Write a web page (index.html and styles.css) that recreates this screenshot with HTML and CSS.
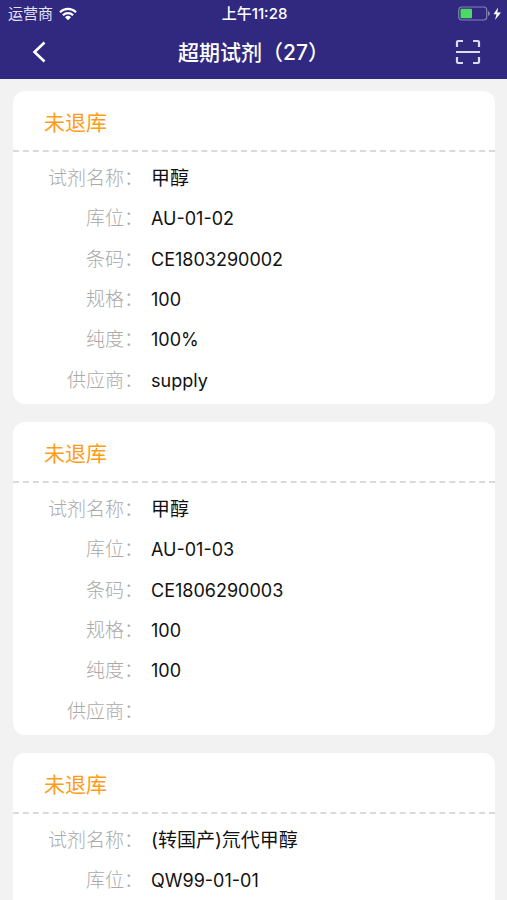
FILE: index.html
```html
<!DOCTYPE html>
<html lang="zh-CN">
<head>
<meta charset="utf-8">
<meta name="viewport" content="width=device-width, initial-scale=1">
<title>超期试剂（27）</title>
<link rel="stylesheet" href="styles.css">
</head>
<body>
<header class="top">
  <div class="status">
    <div class="status-side">
      <span>运营商</span>
      <svg class="wifi" width="18" height="14" viewBox="0 0 18 14" aria-hidden="true">
        <g fill="none" stroke="currentColor" stroke-width="2.2">
          <path d="M1 5.2a11.4 11.4 0 0 1 16 0"/>
          <path d="M3.9 8.2a7.3 7.3 0 0 1 10.2 0"/>
        </g>
        <path d="M9 13.2 6 10.3a4.3 4.3 0 0 1 6 0z" fill="currentColor"/>
      </svg>
    </div>
    <time class="clock">上午11:28</time>
    <div class="status-side status-end">
      <svg width="44" height="16" viewBox="0 0 44 16" aria-hidden="true">
        <rect x="1.7" y="1" width="28" height="13" rx="3" fill="none" stroke="#8582b4" stroke-width="1.2"/>
        <path d="M31 5q2 .8 2 2.5t-2 2.5z" fill="#8582b4"/>
        <rect x="3.5" y="2.8" width="11.5" height="9.4" rx="1" fill="#4cd964"/>
        <path d="M41 1.500 36.500 8.300h3L38 14l6-7.400h-3.600z" fill="#fff"/>
      </svg>
    </div>
  </div>
  <nav class="bar">
    <button class="icon-button" type="button" aria-label="返回">
      <svg width="28" height="28" viewBox="0 0 28 28" aria-hidden="true">
        <path d="M19.500 3.500 9.500 13l10 9.500" fill="none" stroke="#fff" stroke-width="2.6"/>
      </svg>
    </button>
    <h1 class="title">超期试剂（27）</h1>
    <button class="icon-button" type="button" aria-label="扫码">
      <svg width="28" height="28" viewBox="0 0 28 28" aria-hidden="true">
        <path d="M3 8V3.300Q3 2 4.300 2H9M19 2h4.700Q25 2 25 3.300V8M25 18v4.700q0 1.300-1.300 1.300H19M9 24H4.300Q3 24 3 22.700V18M2 13h24" fill="none" stroke="#dcdbf2" stroke-width="2.200"/>
      </svg>
    </button>
  </nav>
</header>
<main class="list">
  <article class="card">
    <h2 class="state">未退库</h2>
    <dl class="fields">
      <div class="row"><dt>试剂名称：</dt><dd class="name">甲醇</dd></div>
      <div class="row"><dt>库位：</dt><dd>AU-01-02</dd></div>
      <div class="row"><dt>条码：</dt><dd>CE1803290002</dd></div>
      <div class="row"><dt>规格：</dt><dd>100</dd></div>
      <div class="row"><dt>纯度：</dt><dd>100%</dd></div>
      <div class="row"><dt>供应商：</dt><dd>supply</dd></div>
    </dl>
  </article>
  <article class="card">
    <h2 class="state">未退库</h2>
    <dl class="fields">
      <div class="row"><dt>试剂名称：</dt><dd class="name">甲醇</dd></div>
      <div class="row"><dt>库位：</dt><dd>AU-01-03</dd></div>
      <div class="row"><dt>条码：</dt><dd>CE1806290003</dd></div>
      <div class="row"><dt>规格：</dt><dd>100</dd></div>
      <div class="row"><dt>纯度：</dt><dd>100</dd></div>
      <div class="row"><dt>供应商：</dt><dd></dd></div>
    </dl>
  </article>
  <article class="card">
    <h2 class="state">未退库</h2>
    <dl class="fields">
      <div class="row"><dt>试剂名称：</dt><dd class="name">(转国产)氘代甲醇</dd></div>
      <div class="row"><dt>库位：</dt><dd>QW99-01-01</dd></div>
    </dl>
  </article>
</main>
</body>
</html>
```
FILE: styles.css
```css
* {
  box-sizing: border-box;
}

body {
  margin: 0;
  height: 100vh;
  display: flex;
  flex-direction: column;
  background: #f2f2f2;
  color: #111;
  font-family: Inter, "Noto Sans CJK SC", sans-serif;
  font-size: 18px;
}

.top {
  flex: none;
  background: #30297f;
  color: #fff;
}

.status {
  display: grid;
  grid-template-columns: 1fr auto 1fr;
  align-items: center;
  height: 27px;
  padding: 0 6px 0 8px;
  font-size: 15px;
  line-height: 27px;
}

.status-side {
  display: flex;
  align-items: center;
  gap: 6px;
  color: #e4e3f3;
}

.wifi {
  color: #fff;
}

.status-end {
  justify-content: flex-end;
}

.clock {
  font-size: 15px;
  font-weight: 500;
}

.bar {
  display: flex;
  align-items: center;
  justify-content: space-between;
  height: 52px;
  padding: 0 25px;
}

.title {
  margin: 0;
  font-size: 21px;
  font-weight: 500;
  line-height: 52px;
}

.icon-button {
  display: flex;
  padding: 0;
  border: 0;
  background: none;
}

.list {
  flex: 1;
  min-height: 0;
  overflow-y: auto;
  scrollbar-width: none;
  padding: 12px 12px 12px 13px;
}

.card {
  margin-bottom: 18px;
  border-radius: 12px;
  background: #fff;
}

.state {
  margin: 0;
  padding: 4px 31px 0;
  border-bottom: 2px dashed #dadada;
  color: #ff9c1a;
  font-size: 21px;
  font-weight: 400;
  line-height: 55px;
}

.fields {
  display: grid;
  grid-template-rows: repeat(6, 1fr);
  height: 252px;
  margin: 0;
  padding: 7px 0 3px;
}

.row {
  display: grid;
  grid-template-columns: 130px 1fr;
  align-items: center;
  column-gap: 8px;
}

.row dt {
  color: #aaa;
  font-size: 19px;
  font-weight: 300;
  line-height: 24px;
  text-align: right;
}

.row dd {
  margin: 0;
  line-height: 24px;
}

.row .name {
  font-size: 19px;
}
```
